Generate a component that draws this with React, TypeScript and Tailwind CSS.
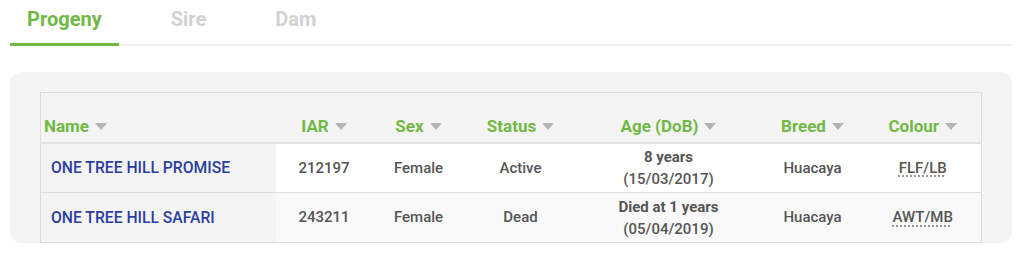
const rows = [
  {
    name: "ONE TREE HILL PROMISE",
    iar: "212197",
    sex: "Female",
    status: "Active",
    age: "8 years",
    dob: "(15/03/2017)",
    breed: "Huacaya",
    colour: "FLF/LB",
  },
  {
    name: "ONE TREE HILL SAFARI",
    iar: "243211",
    sex: "Female",
    status: "Dead",
    age: "Died at 1 years",
    dob: "(05/04/2019)",
    breed: "Huacaya",
    colour: "AWT/MB",
  },
];

const columns = [
  { label: "Name", width: "w-[235px]", align: "text-left pl-[3px]" },
  { label: "IAR", width: "w-[97px]", align: "text-center" },
  { label: "Sex", width: "w-[92px]", align: "text-center" },
  { label: "Status", width: "w-[112px]", align: "text-center" },
  { label: "Age (DoB)", width: "w-[184px]", align: "text-center" },
  { label: "Breed", width: "w-[104px]", align: "text-center" },
  { label: "Colour", width: "", align: "text-center" },
];

function Caret() {
  return (
    <svg width="12" height="7" viewBox="0 0 12 7" className="inline-block ml-[6px] mb-[3px]">
      <path d="M0 0 L12 0 L6 7 Z" fill="#b5b5b5" />
    </svg>
  );
}

export default function App() {
  return (
    <div
      className="w-[1024px] h-[257px] bg-white overflow-hidden"
      style={{ fontFamily: "Roboto, 'Liberation Sans', sans-serif" }}
    >
      {/* tabs */}
      <div className="flex gap-[35px] ml-[10px] mr-[12px] border-b-2 border-[#f0f0f0] h-[46px]">
        <div className="px-[17px] border-b-[3px] border-[#72b845] -mb-[2px] pt-[4px] text-[20px] font-bold text-[#72b845]">
          Progeny
        </div>
        <div className="px-[17px] pt-[4px] text-[20px] font-bold text-[#d2d2d2]">
          Sire
        </div>
        <div className="px-[17px] pt-[4px] text-[20px] font-bold text-[#d2d2d2]">
          Dam
        </div>
      </div>

      {/* card */}
      <div className="ml-[10px] mr-[12px] mt-[26px] bg-[#f4f4f4] rounded-[12px] pt-[20px] pl-[30px] pr-[30px] h-[171px]">
        <table className="w-[942px] table-fixed border-collapse border border-[#dcdcdc]">
          <thead>
            <tr className="h-[50px] border-b-2 border-[#e2e2e2]">
              {columns.map((c) => (
                <th
                  key={c.label}
                  className={`${c.width} ${c.align} align-bottom pb-[2px] text-[17px] font-bold text-[#72b845]`}
                >
                  {c.label}
                  <Caret />
                </th>
              ))}
            </tr>
          </thead>
          <tbody>
            {rows.map((r, i) => (
              <tr
                key={r.name}
                className={`h-[50px] border-b border-[#dcdcdc] text-[15px] font-medium text-[#555] ${
                  i === 0 ? "bg-white" : "bg-[#f9f9f9]"
                }`}
              >
                <td className="bg-[#f4f4f4] pl-[10px] text-left">
                  <a className="text-[#2b3ea0] font-medium text-[15.7px]">{r.name}</a>
                </td>
                <td className="text-center">{r.iar}</td>
                <td className="text-center">{r.sex}</td>
                <td className="text-center">{r.status}</td>
                <td className="text-center leading-[22px]">
                  <div className="font-bold">{r.age}</div>
                  <div>{r.dob}</div>
                </td>
                <td className="text-center">{r.breed}</td>
                <td className="text-center">
                  <abbr className="underline decoration-dotted decoration-[#777] underline-offset-[3px]">
                    {r.colour}
                  </abbr>
                </td>
              </tr>
            ))}
          </tbody>
        </table>
      </div>
    </div>
  );
}
